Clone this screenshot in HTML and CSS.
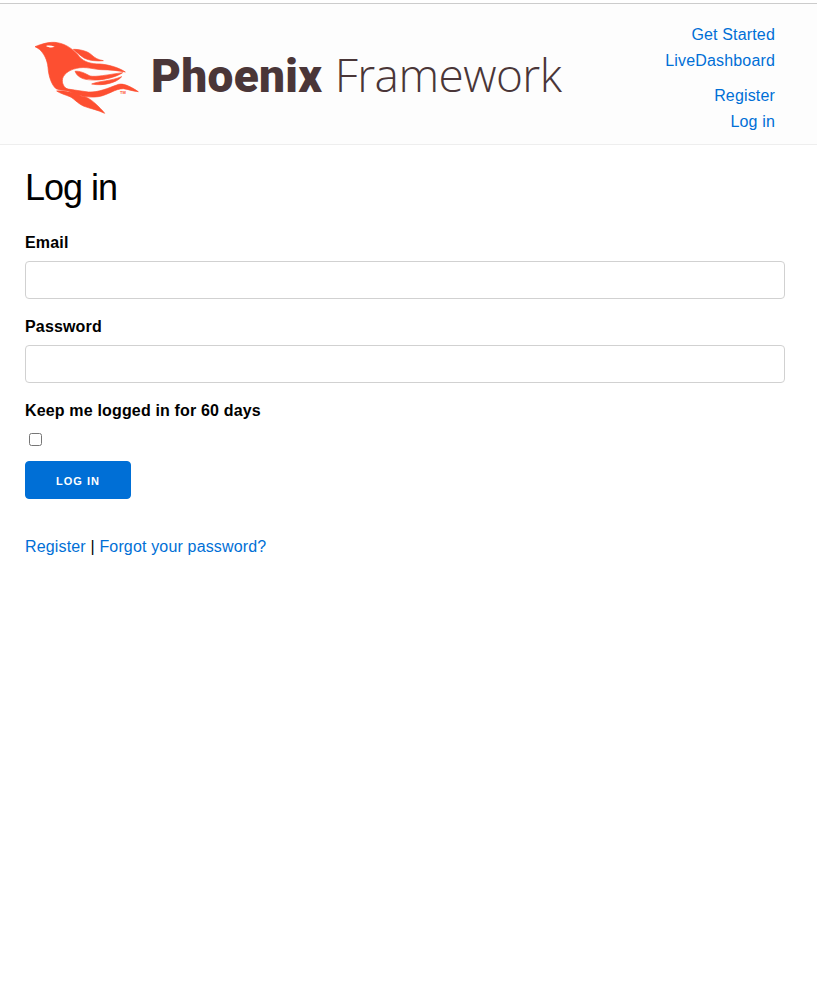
FILE: index.html
```html
<!DOCTYPE html>
<html lang="en">
<head>
    <meta charset="UTF-8">
    <meta name="viewport" content="width=device-width, initial-scale=1.0">
    <title>Log in</title>
    <link rel="stylesheet" href="styles.css">
</head>
<body>
    <header class="topo">
        <a class="logo" href="#">
            <svg class="ave" viewBox="0 0 390 270" width="130" height="90" aria-hidden="true">
                <g class="plumas">
                    <path d="M45 50C65 42 90 34 112 38C140 43 160 58 178 80C192 97 215 102 240 102C265 104 295 112 316 126C295 122 270 119 245 119C225 119 195 108 170 115C145 120 127 135 127 152C127 165 135 176 152 182C135 182 120 180 108 176C95 165 86 140 84 112C82 90 72 70 58 58C54 55 50 52 45 50Z"/>
                    <path d="M160 58C178 58 200 62 214 74C224 84 236 90 250 92C232 94 206 92 192 84C180 76 170 68 160 58Z"/>
                    <path d="M165 124C180 122 195 130 210 138C228 142 262 134 308 128C285 143 250 150 225 150C200 150 175 148 165 124Z"/>
                    <path d="M215 162C240 152 270 154 305 140C290 158 250 169 215 162Z"/>
                    <path d="M130 175C150 178 175 182 205 186C235 188 265 174 290 165C305 158 325 165 355 185C340 184 325 178 310 176C285 176 265 195 235 200C200 205 165 195 130 175Z"/>
                    <path d="M110 183C130 180 155 190 175 188C185 193 182 196 178 198C195 196 215 210 225 220C238 232 248 242 254 250C235 240 210 236 190 228C170 218 165 208 150 200C135 194 120 190 110 183Z"/>
                </g>
                <path class="ojo" d="M78 48C84 46 94 46 104 50C96 54 86 53 78 48Z"/>
                <text class="tm" x="300" y="192">TM</text>
            </svg>
            <span class="marca"><b>Phoenix</b> Framework</span>
        </a>
        <nav class="menu">
            <ul>
                <li><a href="#">Get Started</a></li>
                <li><a href="#">LiveDashboard</a></li>
            </ul>
            <ul>
                <li><a href="#">Register</a></li>
                <li><a href="#">Log in</a></li>
            </ul>
        </nav>
    </header>

    <main class="contenido">
        <h1>Log in</h1>
        <form>
            <label for="email">Email</label>
            <input class="campo" type="email" id="email">
            <label for="password">Password</label>
            <input class="campo" type="password" id="password">
            <label for="remember">Keep me logged in for 60 days</label>
            <input class="casilla" type="checkbox" id="remember">
            <button class="boton" type="button">Log in</button>
        </form>
        <p class="enlaces"><a href="#">Register</a> | <a href="#">Forgot your password?</a></p>
    </main>
</body>
</html>
```

FILE: styles.css
```css
body {
    margin: 0;
    padding-top: 3px;
    font-family: "Liberation Sans", Arial, sans-serif;
    font-size: 16px;
    line-height: 25.6px;
    letter-spacing: 0.16px;
    color: #000;
    background: #fff;
}
a {
    color: #006fd6;
    text-decoration: none;
}
.topo {
    display: flex;
    justify-content: space-between;
    height: 140px;
    border-top: 1px solid #ccc;
    border-bottom: 1px solid #eee;
    background: #fdfdfd;
    padding-right: 42px;
}
.logo {
    display: flex;
    align-items: flex-start;
    padding: 26px 0 0 20px;
    color: #4a3638;
}
.ave {
    flex: none;
}
.plumas {
    fill: #fd4f31;
    stroke: #fd4f31;
    stroke-width: 2;
    stroke-linejoin: round;
}
.ojo {
    fill: #fff;
}
.tm {
    font-size: 12px;
    font-weight: 700;
    fill: #fd4f31;
    letter-spacing: 0;
}
.marca {
    margin: 14px 0 0 1px;
    font-family: "Open Sans", sans-serif;
    font-size: 46px;
    font-weight: 300;
    letter-spacing: -0.55px;
    word-spacing: 1px;
    line-height: 60px;
    white-space: nowrap;
}
.marca b {
    font-family: Roboto, sans-serif;
    font-weight: 900;
    letter-spacing: 0.3px;
}
.menu {
    padding-top: 18px;
    text-align: right;
}
.menu ul {
    list-style: none;
    margin: 0 0 10px;
    padding: 0;
}
.contenido {
    width: 760px;
    margin-left: 25px;
}
h1 {
    margin: 20px 0 0;
    font-size: 36px;
    font-weight: 400;
    line-height: 46px;
    letter-spacing: -1px;
}
form {
    margin-top: 19px;
}
label {
    display: block;
    font-weight: 700;
    line-height: 26px;
    margin-bottom: 5px;
}
.campo {
    display: block;
    box-sizing: border-box;
    width: 100%;
    height: 38px;
    margin: 0 0 15px;
    border: 1px solid #d1d1d1;
    border-radius: 4px;
    background: #fff;
}
.casilla {
    display: block;
    margin: 9px 0 15px 4px;
    width: 13px;
    height: 13px;
}
.boton {
    display: block;
    height: 38px;
    padding: 1px 30px 0;
    border: 1px solid #006fd6;
    border-radius: 4px;
    background: #006fd6;
    color: #fff;
    font-family: inherit;
    font-size: 11px;
    font-weight: 700;
    letter-spacing: 1px;
    text-transform: uppercase;
}
.enlaces {
    margin: 35px 0 0;
}
```
